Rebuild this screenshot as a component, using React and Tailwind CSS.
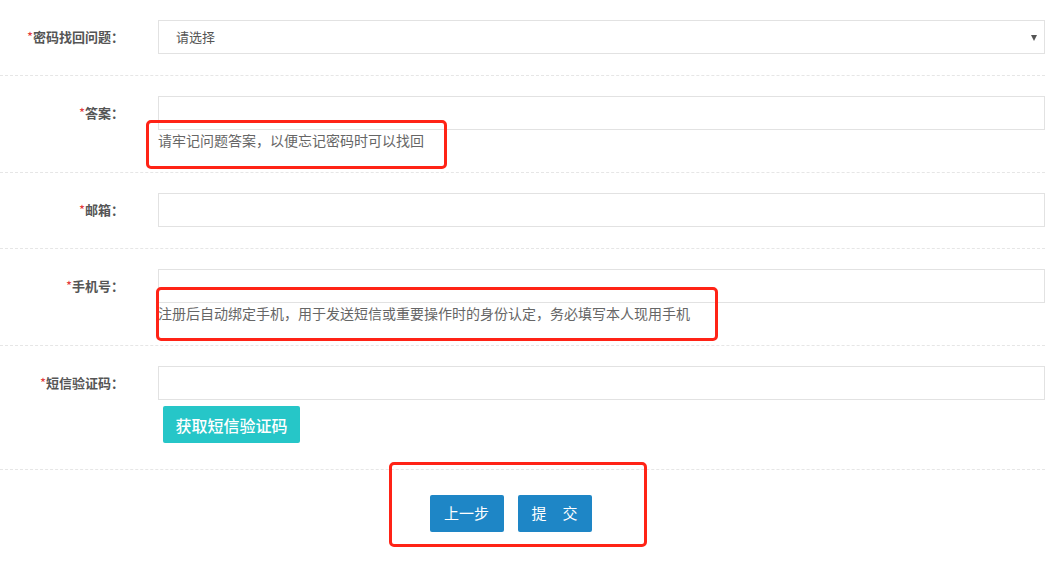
import React from "react";

const font = { fontFamily: '"Noto Sans CJK SC", "Liberation Sans", sans-serif' };

const Label = ({ text }) => (
  <div className="w-[124px] shrink-0 text-right text-[13px] font-bold leading-[34px] text-[#555]">
    <span className="font-normal text-[#e4393c]">*</span>
    {text}：
  </div>
);

const Row = ({ label, children }) => (
  <div className="mr-4 flex items-start gap-[34px] border-b border-dashed border-[#e6e6e6] pt-5 pb-[21px]">
    <Label text={label} />
    <div className="flex-1">{children}</div>
  </div>
);

const Input = () => (
  <input
    type="text"
    className="block h-[34px] w-full border border-[#e2e2e2] bg-white px-3 text-[13px] outline-none"
  />
);

const Help = ({ children }) => (
  <div className="text-[14px] leading-[21px] text-[#666]">{children}</div>
);

const Mark = ({ className }) => (
  <div className={"pointer-events-none absolute rounded-[5px] border-[3px] border-[#ff2316] " + className}></div>
);

const App = () => {
  return (
    <div className="relative h-[568px] w-[1061px] overflow-hidden bg-white" style={font}>
      <Row label="密码找回问题">
        <div className="relative flex h-[34px] items-center border border-[#e2e2e2] bg-white pl-[17px] text-[13px] text-[#555]">
          请选择
          <span className="absolute right-[7px] top-[14px] h-0 w-0 border-x-[3px] border-t-[6px] border-x-transparent border-t-[#555]"></span>
        </div>
      </Row>
      <Row label="答案">
        <Input />
        <Help>请牢记问题答案，以便忘记密码时可以找回</Help>
      </Row>
      <Row label="邮箱">
        <Input />
      </Row>
      <Row label="手机号">
        <Input />
        <Help>注册后自动绑定手机，用于发送短信或重要操作时的身份认定，务必填写本人现用手机</Help>
      </Row>
      <div className="mr-4 flex items-start gap-[34px] border-b border-dashed border-[#e6e6e6] pt-5 pb-[26px]">
        <Label text="短信验证码" />
        <div className="flex-1">
          <Input />
          <button className="ml-[5px] mt-[6px] h-[37px] w-[137px] rounded-[2px] bg-[#26c6c8] text-[16px] font-medium text-white">
            获取短信验证码
          </button>
        </div>
      </div>
      <div className="flex justify-center gap-[14px] pt-[25px] pr-[40px]">
        <button className="h-[37px] w-[74px] rounded-[2px] bg-[#1e86c6] text-[15px] text-white">上一步</button>
        <button className="flex h-[37px] w-[74px] items-center justify-center gap-[16px] rounded-[2px] bg-[#1e86c6] text-[15px] text-white">
          <span>提</span>
          <span>交</span>
        </button>
      </div>

      <Mark className="left-[146px] top-[120px] h-[49px] w-[301px]" />
      <Mark className="left-[156px] top-[287px] h-[54px] w-[562px]" />
      <Mark className="left-[389px] top-[462px] h-[85px] w-[258px]" />
    </div>
  );
};

export default App;
